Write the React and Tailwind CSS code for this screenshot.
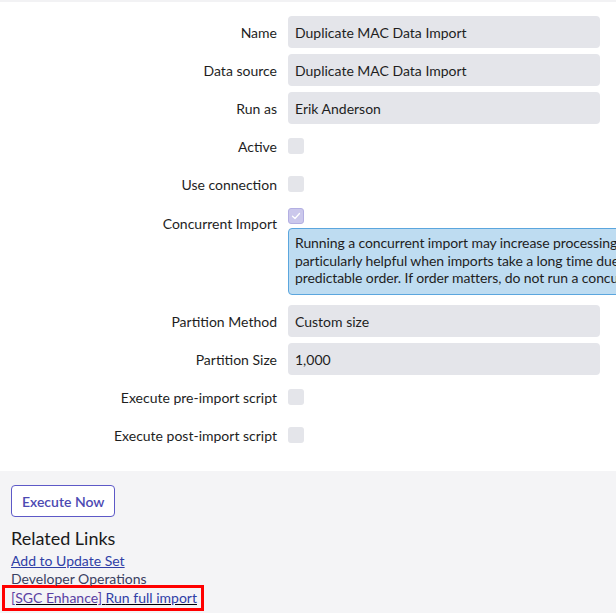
export default function App() {
  const font = { fontFamily: "Lato, 'Noto Sans', sans-serif" };
  const Label = ({ children, h = "h-8" }) => (
    <div className={`${h} flex items-center justify-end text-right text-[14px] text-[#1e1e1e]`}>{children}</div>
  );
  const Input = ({ value }) => (
    <div className="h-8 rounded-[4px] bg-[#e4e5ea] px-[7px] flex items-center text-[14px] text-[#1e1e1e]">{value}</div>
  );
  const Check = () => (
    <div className="h-8 flex items-center">
      <div className="w-4 h-4 rounded-[3px] bg-[#e4e5ea]" />
    </div>
  );
  return (
    <div className="w-[616px] h-[613px] overflow-hidden bg-white" style={font}>
      <div className="h-[2px] bg-[#f2f2f4]" />
      <div className="grid grid-cols-[277px_312px] gap-x-[11px] gap-y-[6px] pt-[14px] pb-[20px]">
        <Label>Name</Label>
        <Input value="Duplicate MAC Data Import" />
        <Label>Data source</Label>
        <Input value="Duplicate MAC Data Import" />
        <Label>Run as</Label>
        <Input value="Erik Anderson" />
        <Label>Active</Label>
        <Check />
        <Label>Use connection</Label>
        <Check />
        <div className="pt-[1px]">
          <Label>Concurrent Import</Label>
        </div>
        <div className="pt-[2px] pb-[4px]">
          <div className="w-4 h-4 rounded-[3px] bg-[#cbc8ec] border border-[#b3afe2] flex items-center justify-center">
            <svg width="10" height="10" viewBox="0 0 10 10" fill="none">
              <path d="M1.5 5.2 L4 7.5 L8.5 2.5" stroke="white" strokeWidth="1.3" strokeLinecap="round" strokeLinejoin="round" />
            </svg>
          </div>
          <div className="mt-[4px] w-[520px] h-[67px] rounded-[4px] border border-[#5ba6de] bg-[#bedcf1] px-[6px] pt-[5px] text-[14px] leading-[17.5px] tracking-[-0.1px] text-[#1e1e1e] whitespace-nowrap">
            <div>Running a concurrent import may increase processing speed. This is</div>
            <div>particularly helpful when imports take a long time due to a large amount</div>
            <div>predictable order. If order matters, do not run a concurrent import.</div>
          </div>
        </div>
        <Label>Partition Method</Label>
        <Input value="Custom size" />
        <Label>Partition Size</Label>
        <Input value="1,000" />
        <Label>Execute pre-import script</Label>
        <Check />
        <Label>Execute post-import script</Label>
        <Check />
      </div>
      <div className="bg-[#f4f4f6] h-[200px] px-[11px] pt-[14px]">
        <button className="h-[32px] px-[10px] rounded-[4px] border border-[#5d59c7] bg-white text-[14px] font-semibold text-[#4d49b3]">
          Execute Now
        </button>
        <div className="mt-[10px] text-[18px] leading-[22px] text-[#1a1a1a]">Related Links</div>
        <div className="mt-[3px] text-[14px] leading-[17.5px]">
          <div><a className="underline text-[#2f3ea6]">Add to Update Set</a></div>
          <div className="text-[#3a4162]">Developer Operations</div>
          <div className="-ml-[9px] -mt-[2px] w-[202px] h-[26px] border-[3px] border-[#ff0000] pl-[6px] flex items-center">
            <a className="underline"><span className="text-[#5a3fa3]">[SGC Enhance]</span> <span className="text-[#2f3ea6]">Run full import</span></a>
          </div>
        </div>
      </div>
    </div>
  );
}
